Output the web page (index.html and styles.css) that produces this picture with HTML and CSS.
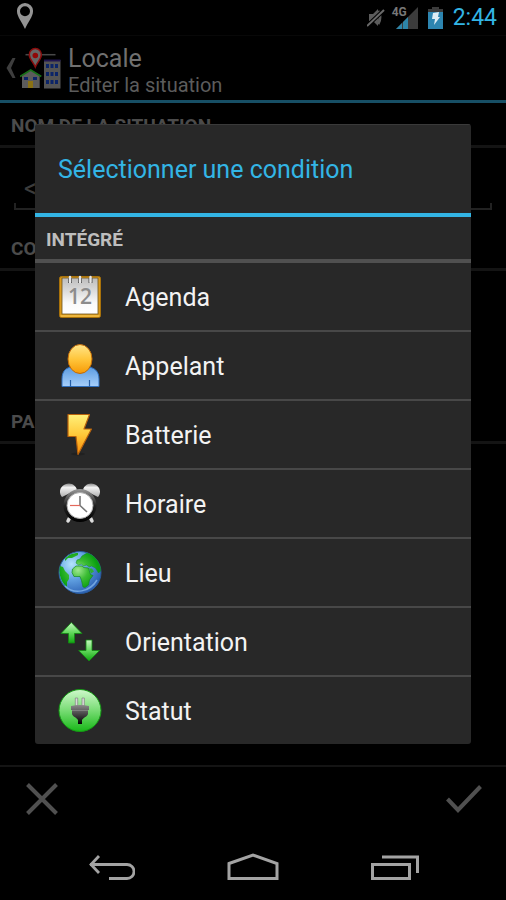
FILE: index.html
```
<!DOCTYPE html>
<html lang="fr">
<head>
    <meta charset="UTF-8">
    <meta name="viewport" content="width=device-width, initial-scale=1.0">
    <title>Locale - Editer la situation</title>
    <link rel="stylesheet" href="styles.css">
</head>
<body>
    <div class="screen">
        <header class="status-bar">
            <svg class="status-pin" width="16" height="26" viewBox="0 0 16 26">
                <path fill="#949494" fill-rule="evenodd" d="M8 0a8 8 0 0 1 8 8.500C16 13.500 11 19 8 26C5 19 0 13.500 0 8.500A8 8 0 0 1 8 0zM8 3.200a5 5 0 1 0 0 10a5 5 0 1 0 0-10z"/>
            </svg>
            <div class="status-icons">
                <svg width="19" height="20" viewBox="0 0 19 20">
                    <path fill="#5c5c5c" d="M2 6h4l5-5v17l-5-5H2z"/>
                    <path d="M11 3q4 6 0 13" fill="none" stroke="#5c5c5c" stroke-width="3"/>
                    <path d="M0 18L17 2" stroke="#000" stroke-width="4"/>
                    <path d="M0 18L17 2" stroke="#6a6a6a" stroke-width="2"/>
                </svg>
                <div class="signal">
                    <span class="network">4G</span>
                    <svg width="26" height="22" viewBox="0 0 26 22">
                        <path fill="#3c3c3c" d="M26 0v22H4z"/>
                        <path fill="#2d85a8" d="M4 22l6-6v6zM11 22v-7l5-5v12z"/>
                    </svg>
                </div>
                <svg width="15" height="22" viewBox="0 0 15 22">
                    <path fill="#3c3c3c" d="M4 0h7v2h4v5H0V2h4z"/>
                    <path fill="#2d85b0" d="M0 5h15v17H0z"/>
                    <path fill="#dfeef5" d="M5 6l6-1-1 5h2L6 18l1-6H4z"/>
                </svg>
                <span class="time">2:44</span>
            </div>
        </header>

        <div class="action-bar">
            <button class="up" type="button" aria-label="Retour">
                <svg width="10" height="20" viewBox="0 0 10 20"><path d="M6.500 0h3L5 10l4.500 10h-3L0.500 10z" fill="#3e3e3e"/></svg>
                <svg width="42" height="42" viewBox="0 0 42 42">
                    <path d="M5.500 7.700h30" stroke="#484848" stroke-width="1.500"/>
                    <path d="M15.300 1.500a6 6 0 0 1 6 6.500c0 4-4 7-6 12c-2-5-6-8-6-12a6 6 0 0 1 6-6.500z" fill="#666" stroke="#8a0d0d" stroke-width="1.500"/>
                    <circle cx="15.300" cy="8.500" r="2.800" fill="#900808"/>
                    <path d="M2 28l8.700-5 9 5v13H2z" fill="#5c5c5c"/>
                    <path d="M0 29.500l10.700-6.500 10.600 6.500" fill="none" stroke="#187018" stroke-width="1.800"/>
                    <path d="M4 30h4v3H4zM13 30h4v3h-4z" fill="#0b2468"/>
                    <path d="M8 34h5v7H8z" fill="#8a7114"/>
                    <path d="M24 13h16.500v28.500H24z" fill="#545454"/>
                    <path d="M24 12.500h16.500v2H24z" fill="#1f1550"/>
                    <path d="M26 17h3v4h-3zM30.500 17h3v4h-3zM35 17h3v4h-3zM26 25h3v4h-3zM30.500 25h3v4h-3zM35 25h3v4h-3zM26 33h3v4h-3zM30.500 33h3v4h-3zM35 33h3v4h-3z" fill="#0b2468"/>
                </svg>
            </button>
            <div class="titles">
                <h1>Locale</h1>
                <p>Editer la situation</p>
            </div>
        </div>

        <main class="content">
            <section>
                <h2><label for="nom">NOM DE LA SITUATION</label></h2>
                <div class="name-field">
                    <input type="text" id="nom" placeholder="&lt;Nouvelle situation&gt;">
                </div>
            </section>
            <section class="conditions">
                <h2>CONDITIONS</h2>
            </section>
            <section>
                <h2>PARAMÈTRES</h2>
            </section>
        </main>

        <div class="bottom-bar">
            <button type="button" aria-label="Annuler">
                <svg width="32" height="32" viewBox="0 0 32 32"><path d="M1.500 1.500l29 29M30.500 1.500l-29 29" stroke="#505050" stroke-width="4"/></svg>
            </button>
            <button type="button" aria-label="Valider">
                <svg width="36" height="28" viewBox="0 0 36 28"><path d="M1.500 14L12 25 34.500 1.500" fill="none" stroke="#505050" stroke-width="4"/></svg>
            </button>
        </div>

        <nav class="nav-bar">
            <button type="button" aria-label="Précédent">
                <svg width="48" height="28" viewBox="0 0 48 28">
                    <path d="M3 11.500h37a7 7 0 0 1 0 14H22M12 3L4 11.500 12 20" fill="none" stroke="#a3a3a3" stroke-width="2.800"/>
                </svg>
            </button>
            <button type="button" aria-label="Accueil">
                <svg width="52" height="28" viewBox="0 0 52 28">
                    <path d="M2 10.500L26 2l24 8.500v15H2z" fill="none" stroke="#a3a3a3" stroke-width="3"/>
                </svg>
            </button>
            <button type="button" aria-label="Applications récentes">
                <svg width="48" height="28" viewBox="0 0 48 28">
                    <path d="M1.500 11.500h37v14h-37zM11 4h35.500v16" fill="none" stroke="#a3a3a3" stroke-width="3"/>
                </svg>
            </button>
        </nav>
    </div>

    <div class="overlay">
        <div class="dialog" role="dialog" aria-labelledby="dialog-title">
            <h2 class="dialog-title" id="dialog-title">Sélectionner une condition</h2>
            <h3 class="dialog-group">INTÉGRÉ</h3>
            <ul class="options">
                <li><button type="button">
                    <svg width="44" height="44" viewBox="0 0 44 44">
                        <defs>
                            <linearGradient id="page" x1="0" y1="0" x2="0" y2="1"><stop offset="0" stop-color="#bcbcbc"/><stop offset="0.700" stop-color="#fafafa"/><stop offset="1" stop-color="#fff"/></linearGradient>
                        </defs>
                        <rect x="1.500" y="1.500" width="41" height="41" rx="2" fill="#d9991b" stroke="#a9720a"/>
                        <path d="M2.500 41h39" stroke="#f3c04a" stroke-width="1.500"/>
                        <rect x="4" y="3" width="36" height="36" fill="url(#page)" stroke="#6b5320" stroke-width="0.800"/>
                        <path d="M10 3v5h4V3M20 3v5h4V3M30.500 3v5h4V3" fill="#555"/>
                        <path d="M12 2v5M22 2v5M32.500 2v5" stroke="#e8e8e8" stroke-width="2.400" stroke-linecap="round"/>
                        <text class="calendar-day" x="22" y="29" text-anchor="middle">12</text>
                    </svg>
                    <span>Agenda</span>
                </button></li>
                <li><button type="button">
                    <svg width="44" height="44" viewBox="0 0 44 44">
                        <defs>
                            <linearGradient id="head" x1="0" y1="0" x2="0" y2="1"><stop offset="0" stop-color="#ffe58a"/><stop offset="0.500" stop-color="#ffc63c"/><stop offset="1" stop-color="#f79a06"/></linearGradient>
                            <linearGradient id="body" x1="0" y1="0" x2="0" y2="1"><stop offset="0" stop-color="#5b9be0"/><stop offset="1" stop-color="#a6cffb"/></linearGradient>
                        </defs>
                        <path d="M4 42.500V35c0-8 4-12 11-12h14c7 0 12 4 12 12v7.500z" fill="url(#body)" stroke="#2f6fbe"/>
                        <path d="M12.500 36v6.500M31.500 36v6.500" stroke="#255fa8" stroke-width="1.200"/>
                        <ellipse cx="22" cy="15" rx="12" ry="14.500" fill="url(#head)" stroke="#c06a08"/>
                    </svg>
                    <span>Appelant</span>
                </button></li>
                <li><button type="button">
                    <svg width="44" height="44" viewBox="0 0 44 44">
                        <defs>
                            <linearGradient id="bolt" x1="0" y1="0" x2="0" y2="1"><stop offset="0" stop-color="#fff07a"/><stop offset="0.500" stop-color="#ffc93a"/><stop offset="1" stop-color="#f98a06"/></linearGradient>
                        </defs>
                        <ellipse cx="20" cy="41" rx="7" ry="1.500" fill="#202020"/>
                        <path d="M10 1.500h21.500L26 16h7.500L20 41.500 18 23.500h-8z" fill="url(#bolt)" stroke="#b8620c" stroke-width="1.200" stroke-linejoin="round"/>
                    </svg>
                    <span>Batterie</span>
                </button></li>
                <li><button type="button">
                    <svg width="44" height="44" viewBox="0 0 44 44">
                        <defs>
                            <linearGradient id="bell" x1="0" y1="0" x2="0" y2="1"><stop offset="0" stop-color="#8a8a8a"/><stop offset="0.300" stop-color="#f2f2f2"/><stop offset="1" stop-color="#b0b0b0"/></linearGradient>
                            <linearGradient id="rim" x1="0" y1="0" x2="0" y2="1"><stop offset="0" stop-color="#999"/><stop offset="0.500" stop-color="#222"/><stop offset="1" stop-color="#000"/></linearGradient>
                        </defs>
                        <path d="M12 35l-2 4M32 35l2 4" stroke="#ddd" stroke-width="3.500" stroke-linecap="round"/>
                        <path d="M4 15C-1 9 4 1.500 11 1.500c4 0 7 3 8 6zM40 15c5-6 0-13.500-7-13.500-4 0-7 3-8 6z" fill="url(#bell)"/>
                        <circle cx="22" cy="23.500" r="16.500" fill="url(#rim)"/>
                        <circle cx="22" cy="23.500" r="13" fill="#fff" stroke="#aaa"/>
                        <path d="M22 14v9.500l7 6.500" fill="none" stroke="#777" stroke-width="1.600"/>
                        <path d="M12 23.500h10" stroke="#e4695c" stroke-width="1.200"/>
                    </svg>
                    <span>Horaire</span>
                </button></li>
                <li><button type="button">
                    <svg width="44" height="44" viewBox="0 0 44 44">
                        <defs>
                            <radialGradient id="sea" cx="0.300" cy="0.300" r="0.750"><stop offset="0" stop-color="#b4e4fb"/><stop offset="0.500" stop-color="#5f9fe0"/><stop offset="1" stop-color="#2d62b4"/></radialGradient>
                            <radialGradient id="land" gradientUnits="userSpaceOnUse" cx="20" cy="19" r="20"><stop offset="0" stop-color="#a0e890"/><stop offset="0.500" stop-color="#3cbc34"/><stop offset="1" stop-color="#0a9f10"/></radialGradient>
                        </defs>
                        <circle cx="22" cy="21.500" r="21" fill="url(#sea)" stroke="#2a5d9f"/>
                        <path d="M2 15l3 1 2 4 4 4 0 4-2 3 0 5C4 32 0 24 2 15z" fill="url(#land)"/>
                        <path d="M7 8c3-4 8-6 13-6l0 2-4 2-2 1-4 0-3 3z" fill="url(#land)"/>
                        <path d="M18 12l1-3 3-1 2-3 5-3c7 2 12 8 13.500 15l0 3-2 2-3-5-4-2-2 1-3-2-3 1-2-2-3 1z" fill="url(#land)" stroke="#158a24" stroke-width="0.500"/>
                        <path d="M14.500 18l3.500-3 6.500 0 1 1.500 5 .500 2 6.500 2.500 1-3.500 4.500-1 5-3.500 2.500-2-.500-1.500-6.500-1.500-4-6 0-2-4z" fill="url(#land)" stroke="#158a24" stroke-width="0.700"/>
                        <path d="M31 17.500l2 5 3-2-2-3z" fill="#2fae35"/>
                        <path d="M7 35c9 9 25 6 32-6" fill="none" stroke="#8bbdf0" stroke-width="1.500" opacity="0.700"/>
                    </svg>
                    <span>Lieu</span>
                </button></li>
                <li><button type="button">
                    <svg width="44" height="44" viewBox="0 0 44 44">
                        <defs>
                            <linearGradient id="arrow" x1="0" y1="0" x2="0" y2="1"><stop offset="0" stop-color="#c6f7c0"/><stop offset="0.500" stop-color="#62d85c"/><stop offset="1" stop-color="#10a510"/></linearGradient>
                        </defs>
                        <path d="M13.300 2.500L24 13.500h-7.500V23h-6v-9.500H3z" fill="url(#arrow)" stroke="#128c12" stroke-width="0.800"/>
                        <path d="M28 20h6v10.500h7.500L31 41 20.700 30.500H28z" fill="url(#arrow)" stroke="#128c12" stroke-width="0.800"/>
                    </svg>
                    <span>Orientation</span>
                </button></li>
                <li><button type="button">
                    <svg width="44" height="44" viewBox="0 0 44 44">
                        <defs>
                            <linearGradient id="disc" x1="0" y1="0" x2="0" y2="1"><stop offset="0" stop-color="#cff8cb"/><stop offset="0.500" stop-color="#78dc74"/><stop offset="1" stop-color="#18b818"/></linearGradient>
                            <linearGradient id="plug" x1="0" y1="0" x2="0" y2="1"><stop offset="0" stop-color="#8a8a8a"/><stop offset="0.500" stop-color="#444"/><stop offset="1" stop-color="#000"/></linearGradient>
                        </defs>
                        <circle cx="22" cy="21.500" r="21" fill="url(#disc)" stroke="#149a14"/>
                        <path d="M17.300 9h2.400v8h-2.400zM24 9h2.400v8H24z" fill="#d8d8d8" stroke="#777" stroke-width="0.600"/>
                        <path d="M13 17q9-2 18 0v4h-1v4c-1 3-4 3-6 6v4h-4v-4c-2-3-5-3-6-6v-4h-1z" fill="url(#plug)"/>
                        <path d="M14 21.500h16" stroke="#888" stroke-width="0.800"/>
                    </svg>
                    <span>Statut</span>
                </button></li>
            </ul>
        </div>
    </div>
</body>
</html>
```

FILE: styles.css
```
* {
  box-sizing: border-box;
}

body {
  margin: 0;
  background-color: #000;
  color: #f3f3f3;
  font-family: Roboto, sans-serif;
}

h1, h2, h3, p, ul {
  margin: 0;
  padding: 0;
  font-weight: normal;
}

button {
  padding: 0;
  border: none;
  background: none;
  color: inherit;
  font-family: inherit;
  cursor: pointer;
}

svg {
  display: block;
  flex-shrink: 0;
}

.screen {
  display: flex;
  flex-direction: column;
  min-height: 100vh;
}

/* barre d'état */
.status-bar {
  display: flex;
  justify-content: space-between;
  align-items: center;
  height: 36px;
  padding: 0 9px 0 17px;
  border-bottom: 1px solid #080808;
}

.status-pin {
  margin-bottom: 4px;
}

.status-icons {
  display: flex;
  align-items: center;
  gap: 10px;
}

.signal {
  display: flex;
  position: relative;
  margin-left: -4px;
}

.network {
  position: absolute;
  top: -1px;
  left: 0;
  color: #777;
  font-size: 12px;
  font-weight: bold;
  line-height: 12px;
}

.time {
  color: #33b5e5;
  font-size: 23px;
  line-height: 36px;
}

/* barre d'action */
.action-bar {
  display: flex;
  align-items: center;
  height: 67px;
  padding-left: 6px;
  border-bottom: 3px solid #174f65;
}

.up {
  display: flex;
  align-items: center;
  gap: 4px;
  margin-right: 6px;
}

.titles {
  padding-top: 5px;
  color: #5c5c5c;
}

.titles h1 {
  color: #707070;
  font-size: 25px;
  line-height: 28px;
}

.titles p {
  font-size: 20px;
  line-height: 24px;
}

/* formulaire */
.content {
  flex: 1;
}

.content h2 {
  height: 45px;
  padding: 3px 11px 0;
  border-bottom: 3px solid #141414;
  color: #4b4b4b;
  font-size: 19px;
  font-weight: bold;
  line-height: 40px;
}

.name-field {
  height: 78px;
  padding: 20px 14px 0;
}

.name-field input {
  width: 100%;
  height: 42px;
  padding: 0 10px;
  border: none;
  border-bottom: 2px solid #222;
  background: linear-gradient(#222, #222) left bottom / 2px 5px no-repeat,
    linear-gradient(#222, #222) right bottom / 2px 5px no-repeat;
  color: #3c3c3c;
  font-family: inherit;
  font-size: 25px;
}

.name-field input::placeholder {
  color: #3c3c3c;
}

.conditions {
  min-height: 173px;
}

.bottom-bar {
  display: flex;
  justify-content: space-between;
  align-items: center;
  height: 67px;
  padding: 0 24px 2px 26px;
  border-top: 2px solid #141414;
}

.nav-bar {
  display: flex;
  justify-content: center;
  height: 68px;
  padding-top: 2px;
}

.nav-bar button {
  display: flex;
  justify-content: center;
  align-items: center;
  width: 28%;
}

/* boîte de dialogue, centrée entre les deux barres du système */
.overlay {
  display: flex;
  position: absolute;
  top: 36px;
  right: 0;
  bottom: 68px;
  left: 0;
  justify-content: center;
  align-items: center;
  padding: 0 35px;
}

.dialog {
  width: 100%;
  border-radius: 3px;
  background-color: #282828;
  overflow: hidden;
}

.dialog-title {
  height: 93px;
  padding: 0 23px;
  border-top: 1px solid #3a3a3a;
  border-bottom: 4px solid #33b5e5;
  color: #33b5e5;
  font-size: 25px;
  line-height: 90px;
}

.dialog-group {
  height: 46px;
  padding: 0 11px;
  border-bottom: 4px solid #505050;
  color: #bebebe;
  font-size: 19px;
  font-weight: bold;
  line-height: 46px;
}

.options {
  list-style: none;
}

.options li + li {
  border-top: 2px solid #484848;
}

.options button {
  display: flex;
  align-items: center;
  gap: 23px;
  width: 100%;
  height: 67px;
  padding: 0 23px;
  font-size: 25px;
  line-height: 30px;
  text-align: left;
}

.options span {
  padding-top: 2px;
}

.calendar-day {
  fill: #8c8c8c;
  font-family: "Open Sans", sans-serif;
  font-size: 21px;
  font-weight: 600;
}
```
